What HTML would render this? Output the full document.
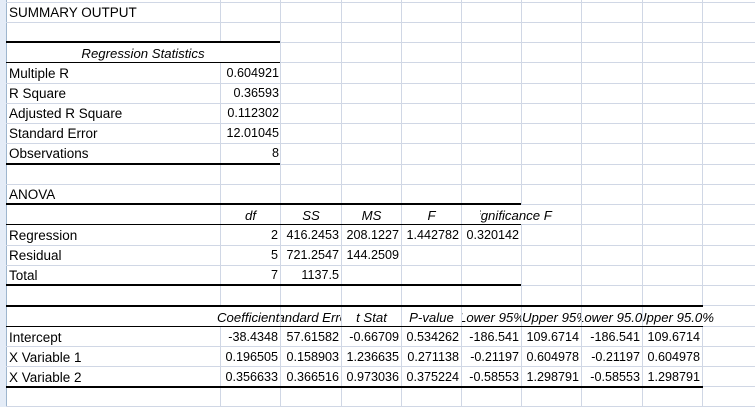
<!DOCTYPE html>
<html><head><meta charset="utf-8"><style>
html,body{margin:0;padding:0;background:#fff;}
body{width:755px;height:407px;position:relative;overflow:hidden;font-family:"Liberation Sans",Arial,sans-serif;font-size:12.6px;color:#000;}
.h{position:absolute;height:1px;background:#d0d7e5;left:6px;width:749px;}
.v{position:absolute;width:1px;background:#d0d7e5;top:0;height:407px;}
.k{position:absolute;height:2px;background:#000;}
.t{position:absolute;height:1px;background:#000;}
.c{position:absolute;height:20px;line-height:21px;white-space:nowrap;overflow:hidden;}
.l{font-size:13.5px;}
.r{text-align:right;}
.m{text-align:center;}
.i{font-style:italic;font-size:13.2px;}
.w{background:#fff;}
</style></head><body>
<div style="position:absolute;left:0;top:0;width:6px;height:407px;background:#e4ecf7;border-right:1px solid #9eb6ce;"></div>
<div class="h" style="top:2px"></div><div class="h" style="top:22px"></div><div class="h" style="top:42px"></div><div class="h" style="top:62px"></div><div class="h" style="top:83px"></div><div class="h" style="top:103px"></div><div class="h" style="top:123px"></div><div class="h" style="top:143px"></div><div class="h" style="top:164px"></div><div class="h" style="top:184px"></div><div class="h" style="top:204px"></div><div class="h" style="top:224px"></div><div class="h" style="top:245px"></div><div class="h" style="top:265px"></div><div class="h" style="top:285px"></div><div class="h" style="top:305px"></div><div class="h" style="top:326px"></div><div class="h" style="top:346px"></div><div class="h" style="top:366px"></div><div class="h" style="top:386px"></div><div class="h" style="top:406px"></div>
<div class="v" style="left:220px"></div><div class="v" style="left:280px"></div><div class="v" style="left:341px"></div><div class="v" style="left:401px"></div><div class="v" style="left:461px"></div><div class="v" style="left:521px"></div><div class="v" style="left:581px"></div><div class="v" style="left:642px"></div><div class="v" style="left:702px"></div>
<div class="k" style="left:6px;width:274px;top:41px"></div>
<div class="t" style="left:6px;width:274px;top:62px"></div>
<div class="k" style="left:6px;width:274px;top:163px"></div>
<div class="k" style="left:6px;width:515px;top:203px"></div>
<div class="t" style="left:6px;width:515px;top:224px"></div>
<div class="k" style="left:6px;width:515px;top:284px"></div>
<div class="k" style="left:6px;width:697px;top:305px"></div>
<div class="t" style="left:6px;width:697px;top:326px"></div>
<div class="k" style="left:6px;width:697px;top:386px"></div>

<div class="c l" style="left:9px;top:2px;width:210px">SUMMARY OUTPUT</div>
<div class="c i m w" style="left:7px;top:43px;width:272px;height:19px">Regression Statistics</div>
<div class="c l" style="left:9px;top:63px;width:210px">Multiple R</div><div class="c r" style="left:221px;top:63px;width:58px">0.604921</div>
<div class="c l" style="left:9px;top:83px;width:210px">R Square</div><div class="c r" style="left:221px;top:83px;width:58px">0.36593</div>
<div class="c l" style="left:9px;top:103px;width:210px">Adjusted R Square</div><div class="c r" style="left:221px;top:103px;width:58px">0.112302</div>
<div class="c l" style="left:9px;top:123px;width:210px">Standard Error</div><div class="c r" style="left:221px;top:123px;width:58px">12.01045</div>
<div class="c l" style="left:9px;top:143px;width:210px">Observations</div><div class="c r" style="left:221px;top:143px;width:58px">8</div>

<div class="c l" style="left:9px;top:184px;width:210px">ANOVA</div>
<div class="c i m" style="left:221px;top:205px;width:59px">df</div>
<div class="c i m" style="left:281px;top:205px;width:60px">SS</div>
<div class="c i m" style="left:342px;top:205px;width:59px">MS</div>
<div class="c i m" style="left:402px;top:205px;width:59px">F</div>
<div class="c i w" style="left:480px;top:205px;width:100px;height:19px"><span style="position:relative;left:-11px">Significance F</span></div>
<div class="c l" style="left:9px;top:225px;width:210px">Regression</div>
<div class="c r" style="left:221px;top:225px;width:57px">2</div><div class="c r" style="left:281px;top:225px;width:58px">416.2453</div><div class="c r" style="left:342px;top:225px;width:57px">208.1227</div><div class="c r" style="left:402px;top:225px;width:57px">1.442782</div><div class="c r" style="left:462px;top:225px;width:57px">0.320142</div>
<div class="c l" style="left:9px;top:245px;width:210px">Residual</div>
<div class="c r" style="left:221px;top:245px;width:57px">5</div><div class="c r" style="left:281px;top:245px;width:58px">721.2547</div><div class="c r" style="left:342px;top:245px;width:57px">144.2509</div>
<div class="c l" style="left:9px;top:265px;width:210px">Total</div>
<div class="c r" style="left:221px;top:265px;width:57px">7</div><div class="c r" style="left:281px;top:265px;width:58px">1137.5</div>

<div class="c i w" style="left:200px;top:307px;width:80px;height:19px"><span style="position:absolute;left:17px">Coefficients</span></div>
<div class="c i w" style="left:281px;top:307px;width:60px;height:19px"><span style="position:absolute;left:-16px">Standard Error</span></div>
<div class="c i m" style="left:342px;top:307px;width:59px">t Stat</div>
<div class="c i m" style="left:402px;top:307px;width:59px">P-value</div>
<div class="c i w" style="left:462px;top:307px;width:59px;height:19px"><span style="position:absolute;left:-3px">Lower 95%</span></div>
<div class="c i w" style="left:522px;top:307px;width:59px;height:19px"><span style="position:absolute;left:0px">Upper 95%</span></div>
<div class="c i w" style="left:582px;top:307px;width:60px;height:19px"><span style="position:absolute;left:-5px">Lower 95.0%</span></div>
<div class="c i w" style="left:643px;top:307px;width:110px;height:19px"><span style="position:absolute;left:-6px">Upper 95.0%</span></div>

<div class="c l" style="left:9px;top:327px;width:210px">Intercept</div>
<div class="c r" style="left:221px;top:327px;width:57px">-38.4348</div><div class="c r" style="left:281px;top:327px;width:58px">57.61582</div><div class="c r" style="left:342px;top:327px;width:57px">-0.66709</div><div class="c r" style="left:402px;top:327px;width:57px">0.534262</div><div class="c r" style="left:462px;top:327px;width:57px">-186.541</div><div class="c r" style="left:522px;top:327px;width:57px">109.6714</div><div class="c r" style="left:582px;top:327px;width:58px">-186.541</div><div class="c r" style="left:643px;top:327px;width:57px">109.6714</div>
<div class="c l" style="left:9px;top:347px;width:210px">X Variable 1</div>
<div class="c r" style="left:221px;top:347px;width:57px">0.196505</div><div class="c r" style="left:281px;top:347px;width:58px">0.158903</div><div class="c r" style="left:342px;top:347px;width:57px">1.236635</div><div class="c r" style="left:402px;top:347px;width:57px">0.271138</div><div class="c r" style="left:462px;top:347px;width:57px">-0.21197</div><div class="c r" style="left:522px;top:347px;width:57px">0.604978</div><div class="c r" style="left:582px;top:347px;width:58px">-0.21197</div><div class="c r" style="left:643px;top:347px;width:57px">0.604978</div>
<div class="c l" style="left:9px;top:367px;width:210px">X Variable 2</div>
<div class="c r" style="left:221px;top:367px;width:57px">0.356633</div><div class="c r" style="left:281px;top:367px;width:58px">0.366516</div><div class="c r" style="left:342px;top:367px;width:57px">0.973036</div><div class="c r" style="left:402px;top:367px;width:57px">0.375224</div><div class="c r" style="left:462px;top:367px;width:57px">-0.58553</div><div class="c r" style="left:522px;top:367px;width:57px">1.298791</div><div class="c r" style="left:582px;top:367px;width:58px">-0.58553</div><div class="c r" style="left:643px;top:367px;width:57px">1.298791</div>
</body></html>
